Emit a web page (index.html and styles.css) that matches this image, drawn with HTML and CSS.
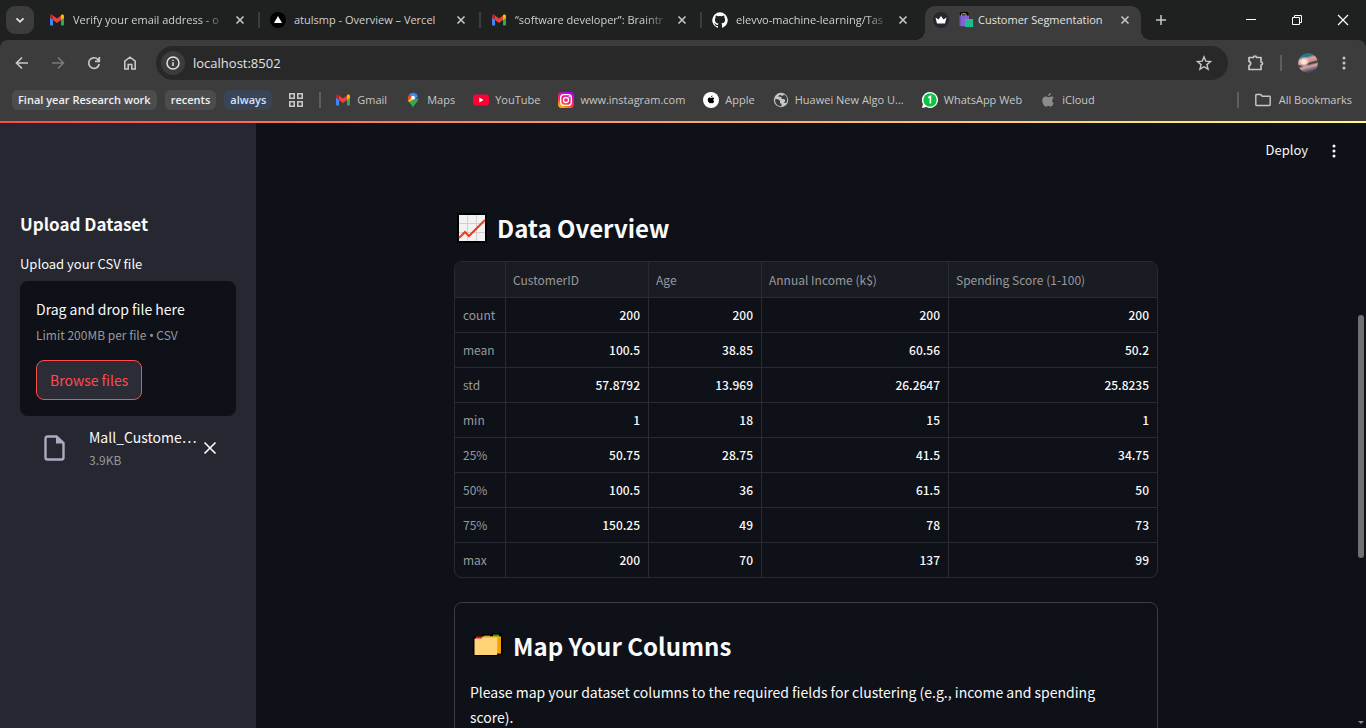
FILE: index.html
```html
<!DOCTYPE html>
<html lang="en">
<head>
<meta charset="utf-8">
<title>Customer Segmentation</title>
<link rel="stylesheet" href="styles.css">
</head>
<body>
<svg class="defs" aria-hidden="true">
  <symbol id="gmail" viewBox="0 0 16 16"><path fill="#4285f4" d="M1 5v7.500c0 .6.400 1 1 1h2V7z"/><path fill="#34a853" d="M12 13.500h2c.6 0 1-.4 1-1V5l-3 2z"/><path fill="#ea4335" d="M4 3.600l4 3 4-3V8l-4 3-4-3z"/><path fill="#c5221f" d="M1 4.200c0-1.600 1.700-2 2.800-1.200L4 3.200V8L1 5.800z"/><path fill="#fbbc04" d="M15 4.200c0-1.600-1.700-2-2.800-1.200l-.2.200V8l3-2.200z"/></symbol>
  <symbol id="close" viewBox="0 0 16 16"><path d="M4.500 4.500l7 7M11.500 4.500l-7 7" fill="none" stroke="currentColor" stroke-width="1.600"/></symbol>
  <symbol id="apple" viewBox="0 0 16 16"><path fill="currentColor" d="M10.800 1c.1 1.400-1.100 2.900-2.600 2.900C8 2.500 9.300 1.200 10.800 1zM13.600 11.300c-.6 1.500-1.600 3.400-2.900 3.400-.9 0-1.200-.6-2.300-.6s-1.500.6-2.300.6c-1.800 0-3.800-3.400-3.800-6.100 0-2.600 1.600-4.100 3.300-4.100 1.100 0 2 .7 2.700.7.600 0 1.700-.8 3-.8.900 0 1.900.5 2.500 1.400-2.200 1.300-1.900 4.400-.2 5.500z"/></symbol>
  <symbol id="kebab" viewBox="0 0 16 16"><g fill="currentColor"><circle cx="8" cy="3" r="1.500"/><circle cx="8" cy="8" r="1.500"/><circle cx="8" cy="13" r="1.500"/></g></symbol>
</svg>

<header class="browser">
  <div class="tabstrip">
    <button class="tab-search" aria-label="Search tabs"><svg class="icon" viewBox="0 0 16 16"><path d="M4.500 6.300L8 9.800l3.500-3.500" fill="none" stroke="currentColor" stroke-width="1.800"/></svg></button>
    <div class="tab">
      <svg class="icon"><use href="#gmail"/></svg>
      <span class="tab-title fade">Verify your email address - o</span>
      <button class="tab-close" aria-label="Close tab"><svg class="icon"><use href="#close"/></svg></button>
    </div>
    <div class="tab">
      <svg class="icon" viewBox="0 0 16 16"><circle cx="8" cy="8" r="8"/><path d="M8 4l4 7H4z" fill="#fff"/></svg>
      <span class="tab-title">atulsmp - Overview – Vercel</span>
      <button class="tab-close" aria-label="Close tab"><svg class="icon"><use href="#close"/></svg></button>
    </div>
    <div class="tab">
      <svg class="icon"><use href="#gmail"/></svg>
      <span class="tab-title fade">“software developer”: Braintr</span>
      <button class="tab-close" aria-label="Close tab"><svg class="icon"><use href="#close"/></svg></button>
    </div>
    <div class="tab last">
      <svg class="icon" viewBox="0 0 16 16"><path fill="#fff" d="M8 .2a8 8 0 0 0-2.500 15.500c.4.100.5-.2.500-.4v-1.400c-2.200.5-2.700-1-2.700-1-.4-.9-.9-1.200-.9-1.200-.7-.5.100-.5.100-.5.800.100 1.200.8 1.200.8.700 1.300 1.900.9 2.300.7.100-.5.300-.9.500-1.100-1.800-.2-3.600-.9-3.600-4 0-.9.300-1.600.8-2.100-.1-.2-.4-1 .1-2.100 0 0 .7-.2 2.200.8a7.600 7.600 0 0 1 4 0c1.500-1 2.200-.8 2.200-.8.400 1.100.200 1.900.100 2.100.5.600.8 1.300.8 2.100 0 3.100-1.900 3.700-3.700 3.900.3.300.6.800.6 1.500v2.300c0 .2.100.5.500.4A8 8 0 0 0 8 .2z"/></svg>
      <span class="tab-title fade">elevvo-machine-learning/Tas</span>
      <button class="tab-close" aria-label="Close tab"><svg class="icon"><use href="#close"/></svg></button>
    </div>
    <div class="tab active">
      <svg class="icon" viewBox="0 0 16 16"><circle cx="8" cy="8" r="8" fill="#262730"/><path d="M2.500 5.500l3 2L8 4l2.500 3.500 3-2-1.500 6H4z" fill="#fff"/></svg>
      <svg class="icon bags" viewBox="0 0 16 16"><path d="M3 4.500V2.200q0-1.200 1.200-1.200h4q1.200 0 1.200 1.200v2.300" fill="none" stroke="#000" stroke-width="2.400"/><path d="M3.500 4.500V2.400q0-.8.800-.8h3q.8 0 .8.800v2" fill="none" stroke="#d8a21f"/><path d="M1 3.500h10v10.800H2.300L1 13z" fill="#8562d4"/><path d="M1 3.500h1.400v10.800L1 13z" fill="#5b3e9e"/><path d="M7 7h8v8H7z" fill="#10c39b"/><path d="M9 8v1.300q0 2 2 2t2-2V8" fill="none" stroke="#8a8d4d"/></svg>
      <span class="tab-title">Customer Segmentation</span>
      <button class="tab-close" aria-label="Close tab"><svg class="icon"><use href="#close"/></svg></button>
    </div>
    <button class="new-tab" aria-label="New tab"><svg class="icon" viewBox="0 0 16 16"><path d="M8 3v10M3 8h10" stroke="currentColor" stroke-width="1.500"/></svg></button>
    <div class="window-controls">
      <button aria-label="Minimize"><svg class="icon" viewBox="0 0 16 16"><path d="M3 7.500h10" stroke="currentColor"/></svg></button>
      <button aria-label="Restore"><svg class="icon" viewBox="0 0 16 16"><path d="M3.500 5.500h7v7h-7zM5.500 5.500v-2h7v7h-2" fill="none" stroke="currentColor"/></svg></button>
      <button aria-label="Close"><svg class="icon" viewBox="0 0 16 16"><path d="M3 3l10 10M13 3L3 13" stroke="currentColor" stroke-width="1.200"/></svg></button>
    </div>
  </div>

  <div class="toolbar">
    <button class="tool" aria-label="Back"><svg class="icon" viewBox="0 0 16 16"><path d="M14 8H3M8 2.500L2.500 8 8 13.500" fill="none" stroke="currentColor" stroke-width="1.700"/></svg></button>
    <button class="tool dim" aria-label="Forward"><svg class="icon" viewBox="0 0 16 16"><path d="M2 8h11M8 2.500L13.500 8 8 13.500" fill="none" stroke="currentColor" stroke-width="1.500"/></svg></button>
    <button class="tool" aria-label="Reload"><svg class="icon" viewBox="0 0 16 16"><path d="M13.200 9a5.300 5.300 0 1 1-1.400-4.600L13 5.600M13.300 2v4.300H9" fill="none" stroke="currentColor" stroke-width="1.700"/></svg></button>
    <button class="tool" aria-label="Home"><svg class="icon" viewBox="0 0 16 16"><path d="M2.800 14V6.200L8 2.200l5.200 4V14H9.800V9.500H6.200V14z" fill="none" stroke="currentColor" stroke-width="1.600"/></svg></button>
    <div class="omnibox">
      <button class="site-info" aria-label="View site information"><svg class="icon" viewBox="0 0 16 16"><circle cx="8" cy="8" r="6" fill="none" stroke="currentColor" stroke-width="1.500"/><path d="M8 7.200V11M8 4.700v1.400" stroke="currentColor" stroke-width="1.500"/></svg></button>
      <input class="url" type="text" aria-label="Address" value="localhost:8502">
      <button class="star" aria-label="Bookmark this tab"><svg class="icon" viewBox="0 0 16 16"><path d="M8 1.900l1.800 4.300 4.700.4-3.600 3 1.200 4.600L8 11.700l-4.100 2.500 1.200-4.600-3.600-3 4.700-.4z" fill="none" stroke="currentColor" stroke-width="1.400"/></svg></button>
    </div>
    <button class="tool ext" aria-label="Extensions"><svg class="icon big" viewBox="0 0 18 18"><path d="M2 3.500h4.500a1.500 1.500 0 0 1 3 0H14v4.500a1.500 1.500 0 0 1 0 3v4.500H2v-3.800a2.200 2.200 0 0 0 0-4.300z" fill="none" stroke="currentColor" stroke-width="1.700" stroke-linejoin="round"/></svg></button>
    <span class="rule"></span>
    <button class="tool avatar-button" aria-label="Profile"><span class="avatar"></span></button>
    <button class="tool" aria-label="Menu"><svg class="icon"><use href="#kebab"/></svg></button>
  </div>

  <nav class="bookmarks" aria-label="Bookmarks">
    <button class="group">Final year Research work</button>
    <button class="group">recents</button>
    <button class="group blue">always</button>
    <button class="apps" aria-label="Apps"><svg class="icon" viewBox="0 0 16 16"><path d="M1.800 1.800h4.400v4.400H1.800zM9.800 1.800h4.400v4.400H9.800zM1.800 9.800h4.400v4.400H1.800zM9.800 9.800h4.400v4.400H9.800z" fill="none" stroke="currentColor" stroke-width="1.600"/></svg></button>
    <span class="rule"></span>
    <a class="mark" href="#"><svg class="icon"><use href="#gmail"/></svg>Gmail</a>
    <a class="mark" href="#"><svg class="icon" viewBox="0 0 16 16"><path fill="#34a853" d="M8 16c.6-3.500 5.200-5.500 5.200-10L4 10c1.500 2 3.400 3.500 4 6z"/><path fill="#fbbc04" d="M4 10.200c-.6-.9-1-2-1.200-3.200L8 3l3 3.500z"/><path fill="#ea4335" d="M2.800 6c0-1.300.4-2.400 1.200-3.300L7 5 3.300 8.500C3 7.800 2.800 7 2.800 6z"/><path fill="#4285f4" d="M4 2.700A5.200 5.200 0 0 1 13 4.300L9 8.500 7 5z"/><circle cx="8" cy="5.700" r="1.900" fill="#fff"/></svg>Maps</a>
    <a class="mark" href="#"><svg class="icon" viewBox="0 0 16 16"><rect y="2.500" width="16" height="11" rx="3" fill="#ff0033"/><path d="M6.300 5.600v4.800L10.500 8z" fill="#fff"/></svg>YouTube</a>
    <a class="mark" href="#"><svg class="icon" viewBox="0 0 16 16"><defs><linearGradient id="insta" x1="0.200" y1="1" x2="0.700" y2="0"><stop offset="0" stop-color="#ffc800"/><stop offset=".4" stop-color="#ff2a50"/><stop offset="1" stop-color="#b000f5"/></linearGradient></defs><rect width="16" height="16" rx="4" fill="url(#insta)"/><rect x="2.700" y="2.700" width="10.600" height="10.600" rx="3" fill="none" stroke="#fff" stroke-width="1.300"/><circle cx="8" cy="8" r="2.500" fill="none" stroke="#fff" stroke-width="1.300"/><circle cx="11.200" cy="4.800" r=".7" fill="#fff"/></svg>www.instagram.com</a>
    <a class="mark" href="#"><svg class="icon" viewBox="0 0 16 16"><circle cx="8" cy="8" r="8" fill="#fff"/><svg x="3.500" y="3" width="9" height="9" color="#000"><use href="#apple"/></svg></svg>Apple</a>
    <a class="mark" href="#"><svg class="icon" viewBox="0 0 16 16"><circle cx="8" cy="8" r="7.200" fill="#c4c7c9"/><path d="M2.200 7l3 .2L7 9v2l1.500 1v2.200A6 6 0 0 1 2.200 7zM5 4.500L8.500 5v2h2.800l1 2-1.300 2h2.200c2-3 1-7-2.200-8.500L9.500 4 7 2.800z" fill="#3c3c3c"/></svg>Huawei New Algo U...</a>
    <a class="mark" href="#"><svg class="icon" viewBox="0 0 16 16"><path d="M8 0a8 8 0 1 1-3.700 15.100L0 16l1-4A8 8 0 0 1 8 0z" fill="#fff"/><circle cx="8" cy="8" r="6.700" fill="#0dc143"/><path d="M6.200 5.800L8.400 4.500v7" fill="none" stroke="#fff" stroke-width="1.600"/></svg>WhatsApp Web</a>
    <a class="mark grey" href="#"><svg class="icon"><use href="#apple"/></svg>iCloud</a>
    <span class="rule push"></span>
    <a class="mark all" href="#"><svg class="icon" viewBox="0 0 16 16"><path d="M.8 3.200q0-.7.700-.7h4.200l1.600 1.800h7.200q.7 0 .7.700v7.800q0 .7-.7.700h-13q-.7 0-.7-.7z" fill="none" stroke="currentColor" stroke-width="1.400"/></svg>All Bookmarks</a>
  </nav>
</header>

<div class="app">
  <div class="decoration"></div>
  <aside class="sidebar">
    <h2 class="side-title">Upload Dataset</h2>
    <p class="label" id="upload-label">Upload your CSV file</p>
    <section class="dropzone" aria-labelledby="upload-label">
      <p class="drop-text">Drag and drop file here</p>
      <p class="hint">Limit 200MB per file <span class="bullet">•</span> CSV</p>
      <button class="browse">Browse files</button>
    </section>
    <div class="file">
      <svg class="file-icon" viewBox="0 0 24 28"><path d="M14.500 2.500H5.500q-2 0-2 2v19q0 2 2 2h14q2 0 2-2V9z" fill="none" stroke="currentColor" stroke-width="2.400"/><path d="M14 2v7.500h7.500z" fill="currentColor"/></svg>
      <div class="file-text">
        <p class="file-name">Mall_Custome…</p>
        <p class="hint">3.9KB</p>
      </div>
      <button class="remove" aria-label="Remove file"><svg class="icon" viewBox="0 0 16 16"><path d="M2.500 2.500l11 11M13.500 2.500l-11 11" stroke="currentColor" stroke-width="1.700"/></svg></button>
    </div>
  </aside>

  <main class="main">
    <div class="app-bar">
      <button class="deploy">Deploy</button>
      <button class="app-menu" aria-label="Main menu"><svg class="icon"><use href="#kebab"/></svg></button>
    </div>
    <div class="content">
      <h2 class="title">
        <svg class="emoji" viewBox="0 0 30 30"><path d="M0 0h30v30H0z"/><path d="M2 2h26v26H2z" fill="#f2f2f2"/><path d="M10.500 2v26M19.500 2v26M2 10.500h26M2 19.500h26" stroke="#cfcfcf"/><path d="M2 25l6-6 4 4L28 7" fill="none" stroke="#f03a17" stroke-width="2"/></svg>
        Data Overview
      </h2>
      <div class="table-frame">
        <table class="stats">
          <colgroup><col class="c-index"><col class="c-id"><col class="c-age"><col class="c-income"><col></colgroup>
          <thead><tr><th></th><th>CustomerID</th><th>Age</th><th>Annual Income (k$)</th><th>Spending Score (1-100)</th></tr></thead>
          <tbody>
            <tr><th>count</th><td>200</td><td>200</td><td>200</td><td>200</td></tr>
            <tr><th>mean</th><td>100.5</td><td>38.85</td><td>60.56</td><td>50.2</td></tr>
            <tr><th>std</th><td>57.8792</td><td>13.969</td><td>26.2647</td><td>25.8235</td></tr>
            <tr><th>min</th><td>1</td><td>18</td><td>15</td><td>1</td></tr>
            <tr><th>25%</th><td>50.75</td><td>28.75</td><td>41.5</td><td>34.75</td></tr>
            <tr><th>50%</th><td>100.5</td><td>36</td><td>61.5</td><td>50</td></tr>
            <tr><th>75%</th><td>150.25</td><td>49</td><td>78</td><td>73</td></tr>
            <tr><th>max</th><td>200</td><td>70</td><td>137</td><td>99</td></tr>
          </tbody>
        </table>
      </div>
      <section class="mapping">
        <h2 class="title">
          <svg class="emoji" viewBox="0 0 30 30"><path d="M0 7q0-2 2-2h7V3h10V2h10v5h1v17h-4v1H0z"/><path d="M3 5.500h6v3H3z" fill="#e3173e"/><path d="M11 4.500h6v3h-6z" fill="#3b8edb"/><path d="M20 3.500h6v3h-6z" fill="#16a916"/><path d="M9 5.500h19v17H9z" fill="#ffb400"/><path d="M25 6h3v16h-3z" fill="#f3a000"/><path d="M1.500 7.500h7l2-1.500H24v18H1.500z" fill="#ffd479"/><path d="M9 6.500h18v-1H11z" fill="#f5ae18"/></svg>
          Map Your Columns
        </h2>
        <p class="body-text">Please map your dataset columns to the required fields for clustering (e.g., income and spending score).</p>
      </section>
    </div>
  </main>
  <div class="scrollbar"><span class="thumb"></span><span class="arrow"></span></div>
</div>
</body>
</html>
```
FILE: styles.css
```css
* { box-sizing: border-box; }
body {
  margin: 0;
  height: 100vh;
  display: flex;
  flex-direction: column;
  overflow: hidden;
  background: #0e1117;
  color: #fafafa;
  font-family: "Noto Sans CJK SC", "Noto Sans", sans-serif;
}
button { margin: 0; padding: 0; border: 0; background: none; color: inherit; font: inherit; display: flex; align-items: center; justify-content: center; }
a { color: inherit; text-decoration: none; }
h2, p { margin: 0; }
.defs { position: absolute; width: 0; height: 0; }
.icon { width: 16px; height: 16px; flex: none; }

/* Browser window */
.browser { flex: none; background: #1f2020; color: #c7c7c7; font-family: "Open Sans", "Noto Sans", sans-serif; font-size: 11px; line-height: 16px; }
.tabstrip { display: flex; height: 40px; padding-left: 6px; }
.tab-search { width: 28px; height: 28px; margin: 6px 7px 0 0; border-radius: 9px; background: #3c3c3c; color: #e3e3e3; }
.tab { position: relative; flex: 0 1 221px; min-width: 0; display: flex; align-items: center; padding: 0 14px 0 8px; }
.tab:not(.last):not(.active)::after { content: ""; position: absolute; right: 2px; top: 12px; width: 2px; height: 16px; background: #3c3c3c; }
.tab-title { flex: 1; min-width: 0; margin: 0 8px; overflow: hidden; white-space: nowrap; color: #d0d0d0; }
.fade { -webkit-mask-image: linear-gradient(90deg, #000 130px, transparent 154px); mask-image: linear-gradient(90deg, #000 130px, transparent 154px); }
.active { flex-basis: 216px; margin-top: 6px; padding: 0 8px 6px; border-radius: 10px 10px 0 0; background: #3c3c3c; }
.active .tab-title { color: #e3e3e3; margin: 0 4px; }
.bags { margin-left: 9px; }
.active::before, .active::after { content: ""; position: absolute; bottom: 0; width: 10px; height: 10px; }
.active::before { left: -10px; background: radial-gradient(circle at 0 0, transparent 10px, #3c3c3c 10px); }
.active::after { right: -10px; background: radial-gradient(circle at 100% 0, transparent 10px, #3c3c3c 10px); }
.new-tab { width: 28px; margin-left: 6px; }
.window-controls { display: flex; margin-left: auto; color: #fff; }
.window-controls button { width: 46px; }

.toolbar { display: flex; align-items: center; height: 46px; padding: 0 4px; background: #3c3c3c; border-radius: 8px 8px 0 0; }
.tool { width: 36px; height: 28px; color: #c7c7c7; }
.dim { color: #7a7a7a; }
.big { width: 18px; height: 18px; }
.omnibox { flex: 1; display: flex; align-items: center; height: 34px; margin: 0 10px 0 8px; padding: 0 16px 0 5px; border-radius: 17px; background: #282828; }
.site-info { width: 24px; height: 24px; border-radius: 12px; background: #3c3c3c; color: #e3e3e3; }
.url { flex: 1; min-width: 0; margin-left: 8px; padding: 0; border: 0; outline: 0; background: none; color: #e3e3e3; font-family: inherit; font-size: 13px; }
.rule { width: 2px; height: 16px; background: #5e5e5e; }
.ext { margin-right: 6px; }
.avatar { width: 20px; height: 20px; border-radius: 10px; background: radial-gradient(circle at 30% 45%, #ffe4d8 0 10%, transparent 32%), linear-gradient(165deg, #28748b 22%, #dca59b 32%, #d28c86 46%, #37313f 54%, #dba6a2 64%, #454a5f 85%); }
.avatar-button { margin-left: 8px; }

.bookmarks { display: flex; align-items: center; height: 35px; padding: 0 14px 7px 12px; background: #3c3c3c; }
.group { height: 20px; margin-right: 8px; padding: 0 6px; border-radius: 6px; background: #4b4c4e; color: #f0f0f0; font-weight: 600; }
.blue { background: #394457; color: #d0e2ff; }
.apps { margin: 0 15px 0 8px; }
.mark { display: flex; align-items: center; gap: 6px; margin-left: 18px; white-space: nowrap; }
.rule + .mark { margin-left: 14px; }
.grey svg { color: #8c8c8c; }
.push { margin-left: auto; }
.mark.all { gap: 8px; margin-left: 16px; }

/* Application */
.app { position: relative; flex: 1; min-height: 0; display: flex; overflow: hidden; }
.decoration { position: absolute; inset: 0 0 auto; height: 2px; background: linear-gradient(90deg, #ff4b4b, #fffd80); }
.sidebar { flex: none; width: 256px; padding: 88px 20px 0; background: #262730; }
.side-title { font-size: 17px; line-height: 30px; font-weight: 600; }
.label { margin: 14px 0 6px; font-size: 13px; line-height: 22px; }
.dropzone { padding: 16px; border-radius: 8px; background: #0e1117; }
.drop-text, .file-name { font-size: 14px; line-height: 25px; }
.hint { font-size: 12px; line-height: 20px; color: #98999c; }
.dropzone .hint { line-height: 26px; }
.dropzone .bullet { font-family: "Noto Sans", sans-serif; line-height: 1; }
.browse { height: 40px; margin-top: 12px; padding: 0 13px; border: 1px solid #ff4b4b; border-radius: 8px; background: #2b2c36; color: #ff4b4b; font-size: 14px; line-height: 20px; }
.file { display: flex; align-items: center; padding: 9px 16px 0 22px; }
.file-icon { width: 24px; height: 28px; flex: none; color: #a9adc1; }
.file-text { flex: 1; min-width: 0; margin-left: 23px; }
.file-name { white-space: nowrap; }
.remove { width: 20px; }

.main { flex: 1; min-width: 0; padding-right: 10px; }
.app-bar { display: flex; justify-content: flex-end; align-items: center; height: 60px; padding-right: 14px; font-size: 13px; line-height: 18px; }
.deploy { padding-bottom: 2px; }
.app-menu { margin-left: 18px; }
.content { width: 100%; max-width: 704px; margin: 0 auto; padding-top: 30px; }
.title { display: flex; align-items: center; gap: 10px; padding-left: 3px; font-size: 24px; line-height: 34px; font-weight: 600; }
.emoji { width: 30px; height: 30px; flex: none; }
.table-frame { margin-top: 16px; border: 1px solid #282b31; border-radius: 8px; overflow: hidden; }
.stats { width: 100%; table-layout: fixed; border-collapse: separate; border-spacing: 0; font-size: 12px; line-height: 18px; }
.c-index { width: 51px; }
.c-id { width: 143px; }
.c-age { width: 113px; }
.c-income { width: 187px; }
.stats th, .stats td { height: 35px; padding: 0 8px; border-right: 1px solid #282b31; border-bottom: 1px solid #282b31; text-align: right; font-weight: 500; }
.stats th { color: #98999d; font-weight: 400; text-align: left; }
.stats thead th { height: 36px; padding: 0 7px; background: #1a1c23; }
.stats th:last-child, .stats td:last-child { border-right: 0; }
.stats tbody tr:last-child > * { height: 34px; border-bottom: 0; }
.mapping { margin-top: 24px; padding: 26px 24px 24px 15px; border: 1px solid #3a3d42; border-radius: 8px; }
.body-text { margin-top: 17px; font-size: 14px; line-height: 25px; }

.scrollbar { position: absolute; top: 0; right: 2px; bottom: 0; width: 6px; }
.thumb { position: absolute; top: 32%; width: 6px; height: 40%; border-radius: 3px; background: #6f7071; }
.arrow { position: absolute; bottom: 4px; border: 3px solid transparent; border-top-color: #8a8a8a; border-bottom: 0; }
```
